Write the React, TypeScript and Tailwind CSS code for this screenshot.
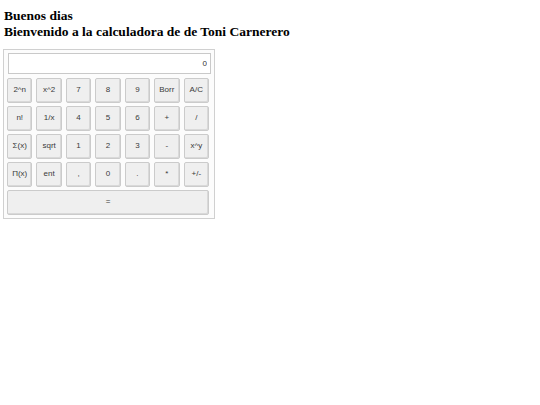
import React from 'react';

const rows: string[][] = [
  ['2^n', 'x^2', '7', '8', '9', 'Borr', 'A/C'],
  ['n!', '1/x', '4', '5', '6', '+', '/'],
  ['Σ(x)', 'sqrt', '1', '2', '3', '-', 'x^y'],
  ['Π(x)', 'ent', ',', '0', '.', '*', '+/-'],
];

const btn =
  'h-[25px] rounded-[2px] border border-[#cbcbcb] bg-[#efefef] text-[8px] text-[#3a3a3a] shadow-[inset_-1px_-1px_0_#d9d9d9]';

export default function App() {
  return (
    <div className="bg-white min-h-[405px]">
      <div className="pl-[4px] pt-[8px] font-['Liberation_Serif',serif] text-[13.5px] leading-[16px] font-bold text-black">
        <div>Buenos dias</div>
        <div>Bienvenido a la calculadora de de Toni Carnerero</div>
      </div>
      <div className="ml-[3px] mt-[8.5px] w-[212px] border border-[#d0d0d0] bg-[#fcfcfc] px-[3px] pt-[3px] pb-[3px] font-['Liberation_Sans',Arial,sans-serif]">
        <input
          readOnly
          value="0"
          className="ml-[1px] block h-[21px] w-[203px] border border-[#c9c9c9] bg-white px-[3px] text-right text-[8px] text-[#333] outline-none"
        />
        <div className="mt-[4px] grid w-[202px] grid-cols-7 gap-x-[4px] gap-y-[3px]">
          {rows.flat().map((k, i) => (
            <button key={i} className={btn}>
              {k}
            </button>
          ))}
          <button className={`${btn} col-span-7`}>=</button>
        </div>
      </div>
    </div>
  );
}
